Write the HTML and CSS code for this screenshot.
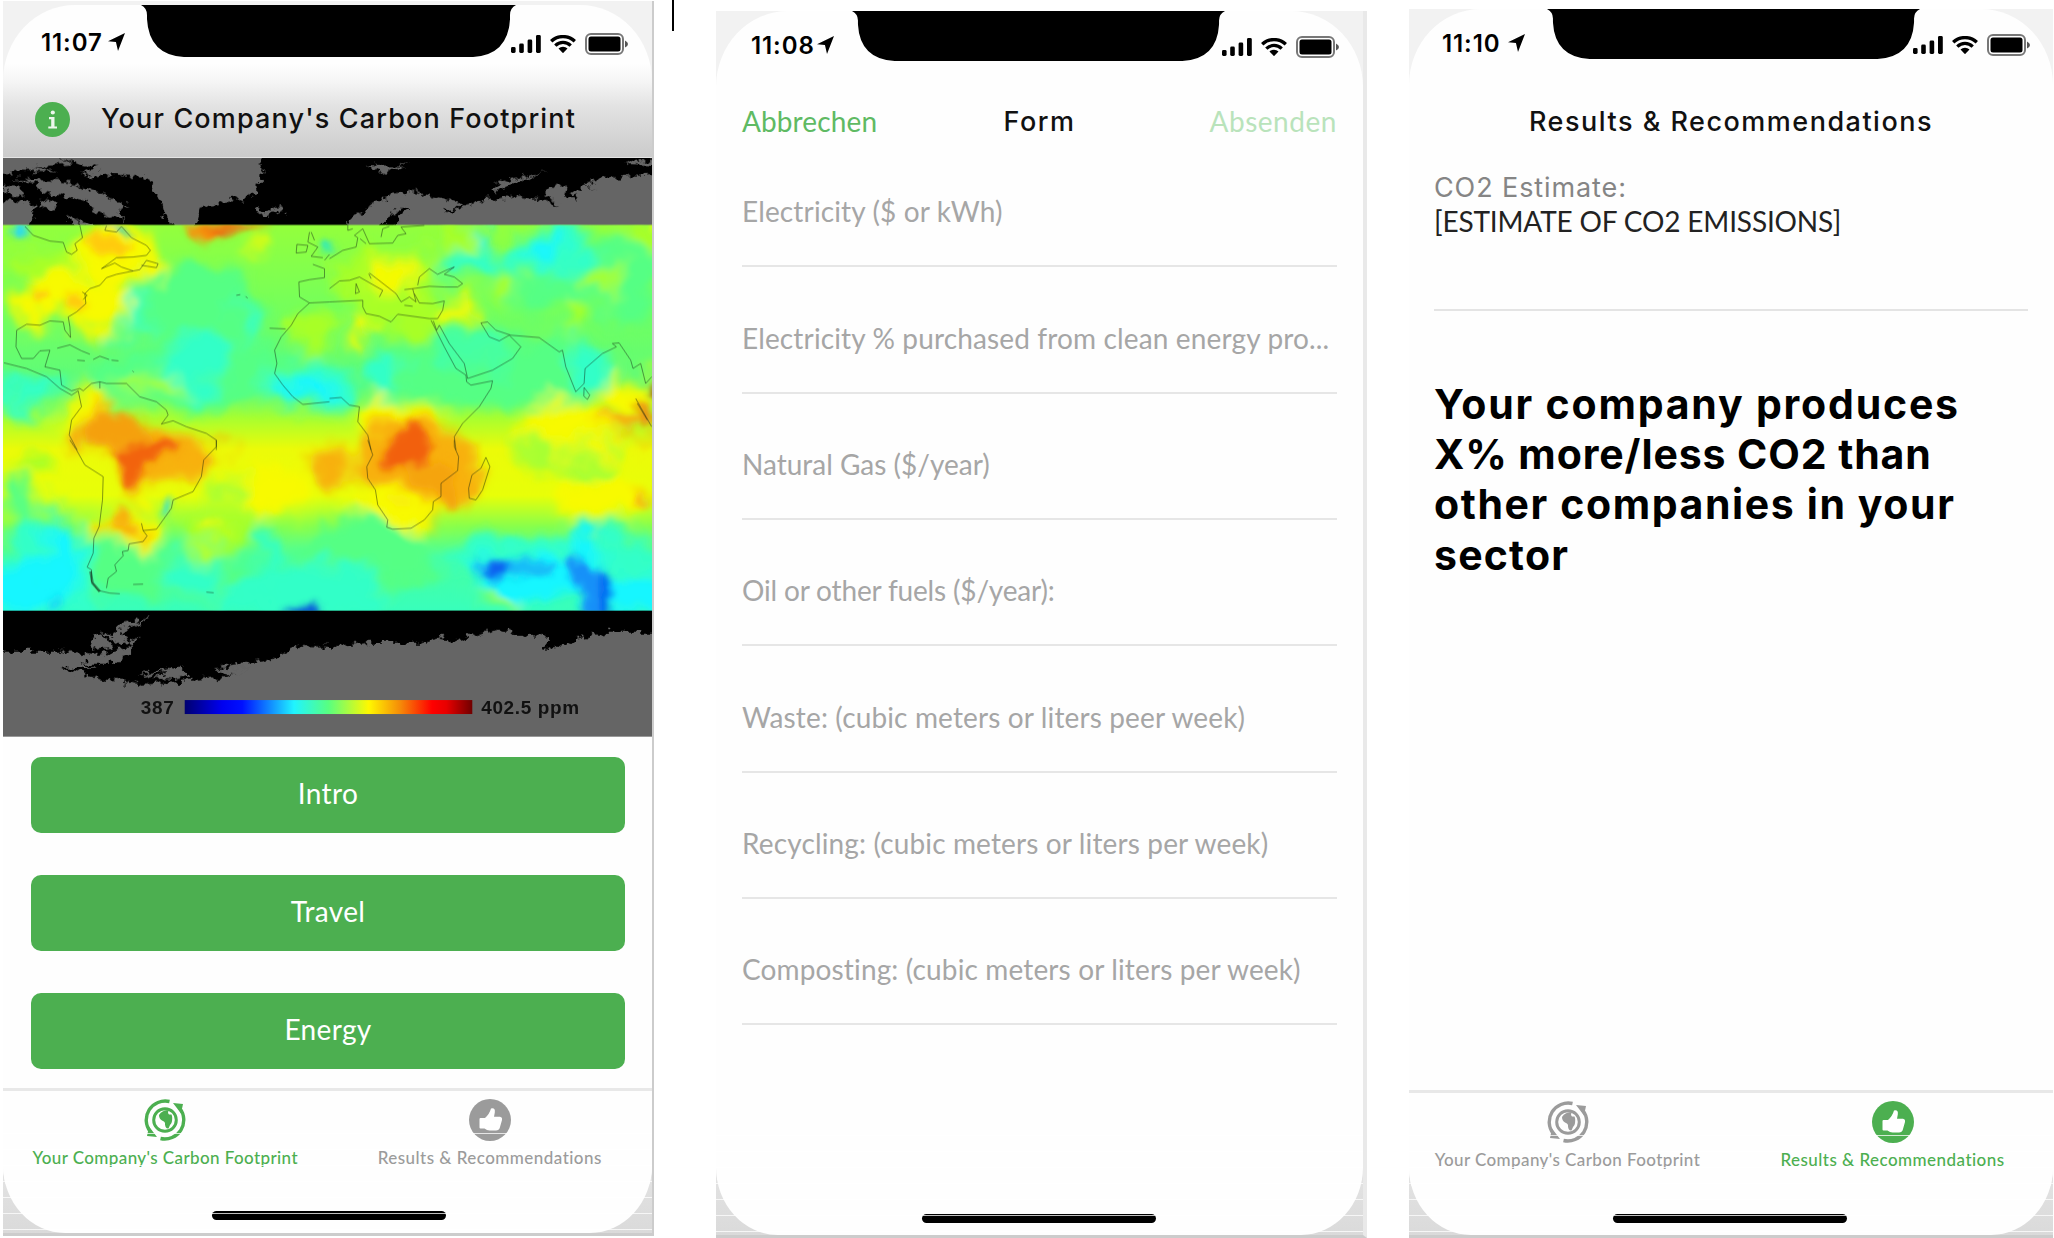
FILE: index.html
```
<!DOCTYPE html>
<html lang="en">
<head>
<meta charset="utf-8">
<title>Carbon Footprint App</title>
<link rel="stylesheet" href="styles.css">
</head>
<body>
<svg class="defs" width="0" height="0" aria-hidden="true">
  <symbol id="arrow" viewBox="0 0 18 19"><path d="M18 0 L0 8.6 L8.4 9.4 L10.6 19 Z"/></symbol>
  <symbol id="signal" viewBox="0 0 30 18"><rect x="0" y="12" width="4.6" height="6" rx="1.4"/><rect x="8.2" y="8.5" width="4.6" height="9.5" rx="1.4"/><rect x="16.6" y="4.5" width="4.6" height="13.500" rx="1.4"/><rect x="25" y="0" width="4.800" height="18" rx="1.4"/></symbol>
  <symbol id="wifi" viewBox="0 0 26 18"><g fill="none" stroke="currentColor" stroke-width="3.300"><path d="M1.200 6.300 A17 17 0 0 1 24.800 6.300"/><path d="M5.300 10.600 A11 11 0 0 1 20.700 10.600"/></g><path d="M8.500 13.600 A6.500 6.500 0 0 1 17.500 13.600 L13 18.200 Z"/></symbol>
  <symbol id="battery" viewBox="0 0 43 22"><rect x="1" y="1" width="37" height="20" rx="5" fill="none" stroke="#777" stroke-width="2"/><rect x="3.500" y="3.500" width="32" height="15" rx="2.500"/><path d="M40 7.500 Q43 9 43 11 Q43 13 40 14.500 Z" fill="#555"/></symbol>
  <symbol id="globe" viewBox="0 0 42 42"><g fill="none" stroke="currentColor" stroke-width="3.400"><path d="M25.500 2.500 A19 19 0 0 0 6.500 33"/><path d="M16.500 39.500 A19 19 0 0 0 35.500 9"/><circle cx="21" cy="21" r="11.300" stroke-width="3"/></g><path d="M29 4 L39 5 L37 14.500 Z M13 38 L3 37 L5 27.500 Z"/><path d="M15 16 Q19 10.500 25 11.500 Q23 13.500 25 15.500 L27.500 15.500 Q29 19 27.500 24 Q25.500 26 24.500 29.500 Q21.500 30 21 25.500 Q21.500 22.500 18 21.500 Q15 19.500 15 16Z"/></symbol>
  <symbol id="thumb" viewBox="0 0 42 42"><circle cx="21" cy="21" r="21"/><path d="M11.500 19 H16 Q20.500 15 22 9.500 Q26.500 8.500 25.800 13.500 L25 17.800 H31 Q33.500 18.400 33 21 L30.800 28.800 Q30 31.500 27 31.500 H20.500 Q18 31.500 15.500 29.500 H11.500 Q10.500 29.500 10.500 28.500 V20 Q10.500 19 11.500 19Z" fill="#fff"/></symbol>
  <symbol id="notch" viewBox="0 0 376 52" preserveAspectRatio="none"><path d="M0 0 H376 Q370 3 370 10 V14 Q368 50 333 52 H43 Q8 50 6 14 V10 Q6 3 0 0Z"/></symbol>
</svg>

<section class="phone phone-home">
  <div class="screen">
    <div class="status">
      <span class="time">11:07</span><svg class="arrow"><use href="#arrow"/></svg>
      <svg class="notch"><use href="#notch"/></svg>
      <span class="indicators"><svg class="signal"><use href="#signal"/></svg><svg class="wifi"><use href="#wifi"/></svg><svg class="battery"><use href="#battery"/></svg></span>
    </div>
    <header class="home-head">
      <svg class="info" viewBox="0 0 35 35"><circle cx="17.500" cy="17.500" r="17.500"/><g fill="#fff" opacity=".9"><circle cx="17.800" cy="10.500" r="2.100"/><path d="M14 15 H19.500 V24.500 H22 V26.600 H13.300 V24.500 H16.200 V17.200 H14Z"/></g></svg>
      <h1 class="title title-home">Your Company's Carbon Footprint</h1>
    </header>
    <svg class="map" viewBox="3 157.500 650 579" preserveAspectRatio="none">
      <defs>
        <linearGradient id="base" x1="0" y1="0" x2="0" y2="1"><stop offset="0" stop-color="#94ff3c"/><stop offset=".22" stop-color="#74ff5c"/><stop offset=".42" stop-color="#5cfc7c"/><stop offset=".5" stop-color="#a8ff30"/><stop offset=".58" stop-color="#ecfb08"/><stop offset=".7" stop-color="#e8ff08"/><stop offset=".78" stop-color="#88ff4c"/><stop offset=".86" stop-color="#48ffa0"/><stop offset="1" stop-color="#38ffbc"/></linearGradient>
        <linearGradient id="scale"><stop offset="0" stop-color="#000070"/><stop offset=".13" stop-color="#0000f0"/><stop offset=".2" stop-color="#0010ff"/><stop offset=".38" stop-color="#20f4ff"/><stop offset=".5" stop-color="#58ff80"/><stop offset=".64" stop-color="#fff800"/><stop offset=".75" stop-color="#f58a08"/><stop offset=".86" stop-color="#f00"/><stop offset=".91" stop-color="#e80000"/><stop offset="1" stop-color="#700000"/></linearGradient>
        <filter id="soft" filterUnits="userSpaceOnUse" x="-40" y="180" width="740" height="480"><feGaussianBlur stdDeviation="7" result="b"/><feTurbulence type="fractalNoise" baseFrequency=".022" numOctaves="3" seed="4" result="n"/><feDisplacementMap in="b" in2="n" scale="52" xChannelSelector="R" yChannelSelector="G"/><feGaussianBlur stdDeviation="1.500"/></filter>
        <filter id="fine" filterUnits="userSpaceOnUse" x="-40" y="180" width="740" height="480"><feGaussianBlur stdDeviation="3.500" result="b"/><feTurbulence type="fractalNoise" baseFrequency=".05" numOctaves="2" seed="9" result="n"/><feDisplacementMap in="b" in2="n" scale="14" xChannelSelector="R" yChannelSelector="G"/><feGaussianBlur stdDeviation=".8"/></filter>
        <filter id="rough" filterUnits="userSpaceOnUse" x="-20" y="130" width="700" height="630"><feTurbulence type="fractalNoise" baseFrequency=".13" numOctaves="3" seed="2" result="n"/><feDisplacementMap in="SourceGraphic" in2="n" scale="13" xChannelSelector="R" yChannelSelector="G"/></filter>
        <clipPath id="band"><rect x="3" y="224.500" width="650" height="386.500"/></clipPath>
      </defs>
      <rect x="3" y="157" width="650" height="580" fill="#000"/>
      <g fill="#656565" filter="url(#rough)">
        <g transform="translate(0 150) scale(.33333)">
          <path d="M120 0 H810 L775 45 800 60 775 72 785 95 770 98 775 125 740 140 670 155 600 175 580 245 H530 L490 190 480 150 455 120 460 95 420 78 340 72 270 80 240 68 300 50 230 40 Z"/>
          <path d="M765 175 L800 182 840 168 855 180 800 195 775 188Z"/>
          <path d="M-12 0 H130 L220 42 100 48 170 62 60 60 -12 75Z M30 84 L120 88 230 100 300 130 390 165 350 180 375 212 310 192 250 150 190 135 130 130 110 100 Z M-12 150 L60 155 110 170 100 200 75 240 H-12Z M-12 105 L50 108 75 130 45 140Z M120 145 L180 160 160 180 125 165Z M190 195 L320 240 H240Z"/>
        </g>
        <g transform="translate(330 150) scale(.33333)">
          <path d="M50 245 V212 L95 190 140 155 190 132 250 124 310 135 395 158 385 175 335 180 355 188 390 180 400 165 460 150 560 138 640 148 690 165 645 130 670 105 710 108 705 140 750 150 730 125 770 105 800 125 770 100 860 78 998 72 V245 H200 L210 195 240 178 210 176 165 205 160 245Z"/>
          <path d="M105 42 L170 45 255 38 200 48 230 60 180 55 155 68 130 50Z M490 112 L540 85 658 66 600 82 550 95 520 115 530 122Z M885 38 L920 28 H998 V48 L930 42Z"/>
        </g>
        <path d="M-10 652 L60 652 96 655 130 648 138 637 120 645 102 632 118 635 120 625 150 618 122 632 132 645 132 655 115 663 80 663 95 668 60 668 95 677 130 676 155 672 168 668 188 670 190 676 155 679 190 680 238 674 236 676 213 669 240 665 272 660 297 646 330 647 370 643 420 643 440 638 455 641 480 634 500 630 520 634 550 637 545 650 558 649 578 638 610 632 670 632 V757 H-10Z"/>
        <path d="M92 640 L102 632 112 648 90 651Z"/>
        <path d="M75 669 L115 668 145 676 165 672 175 676 237 676 180 682 143 685 90 677Z" fill="#000"/>
        <path d="M155 678 L170 670 186 669 189 676 175 679Z M213 669 L250 668 239 675Z"/>
      </g>

      <g clip-path="url(#band)">
        <rect x="3" y="224" width="650" height="388" fill="url(#base)"/>
        <g filter="url(#soft)">
          <g fill="#54ff84"><ellipse cx="200" cy="310" rx="65" ry="50"/><ellipse cx="200" cy="375" rx="110" ry="34"/><ellipse cx="500" cy="370" rx="120" ry="36"/><ellipse cx="570" cy="270" rx="90" ry="40"/><ellipse cx="160" cy="572" rx="90" ry="26"/><ellipse cx="370" cy="555" rx="70" ry="40"/><ellipse cx="20" cy="500" rx="14" ry="20"/><ellipse cx="638" cy="300" rx="20" ry="28"/></g>
          <g fill="#30ffc8"><ellipse cx="190" cy="368" rx="42" ry="28"/><ellipse cx="135" cy="316" rx="7" ry="22"/><ellipse cx="247" cy="325" rx="7" ry="22"/><ellipse cx="22" cy="395" rx="32" ry="14"/><ellipse cx="310" cy="385" rx="38" ry="24"/><ellipse cx="385" cy="380" rx="22" ry="24"/><ellipse cx="470" cy="262" rx="30" ry="14"/><ellipse cx="550" cy="252" rx="46" ry="24"/><ellipse cx="586" cy="365" rx="22" ry="22"/><ellipse cx="50" cy="560" rx="44" ry="52"/><ellipse cx="30" cy="600" rx="64" ry="36"/><ellipse cx="190" cy="570" rx="30" ry="20"/><ellipse cx="320" cy="590" rx="60" ry="28"/><ellipse cx="272" cy="548" rx="9" ry="26"/><ellipse cx="560" cy="565" rx="110" ry="34"/><ellipse cx="630" cy="560" rx="40" ry="20"/><ellipse cx="250" cy="600" rx="50" ry="14"/></g>
          <ellipse cx="475" cy="352" rx="42" ry="18" fill="#44ffa4"/>
          <g fill="#18f6ff"><ellipse cx="307" cy="390" rx="24" ry="13"/><ellipse cx="548" cy="252" rx="20" ry="12"/><ellipse cx="482" cy="236" rx="8" ry="10"/><ellipse cx="62" cy="545" rx="16" ry="34"/><ellipse cx="30" cy="590" rx="42" ry="26"/><ellipse cx="550" cy="580" rx="80" ry="24"/><ellipse cx="580" cy="545" rx="22" ry="12"/><ellipse cx="630" cy="595" rx="40" ry="28"/></g>
          <g fill="#a8ff28"><ellipse cx="45" cy="265" rx="42" ry="22"/><ellipse cx="317" cy="330" rx="22" ry="24"/><ellipse cx="452" cy="236" rx="22" ry="12"/><ellipse cx="507" cy="290" rx="14" ry="12"/><ellipse cx="605" cy="282" rx="18" ry="12"/><ellipse cx="572" cy="320" rx="12" ry="14"/><ellipse cx="640" cy="238" rx="18" ry="14"/><ellipse cx="410" cy="310" rx="60" ry="24"/><ellipse cx="385" cy="275" rx="50" ry="24"/><ellipse cx="220" cy="530" rx="36" ry="20"/><ellipse cx="40" cy="465" rx="22" ry="12"/><ellipse cx="150" cy="385" rx="30" ry="8"/></g>
          <g fill="#f8fa04"><ellipse cx="65" cy="298" rx="54" ry="24"/><ellipse cx="95" cy="306" rx="34" ry="24"/><ellipse cx="118" cy="255" rx="42" ry="30"/><ellipse cx="252" cy="240" rx="9" ry="9"/><ellipse cx="395" cy="275" rx="24" ry="14"/><ellipse cx="363" cy="329" rx="10" ry="13"/><ellipse cx="458" cy="308" rx="16" ry="9"/><ellipse cx="90" cy="410" rx="24" ry="16"/><ellipse cx="400" cy="422" rx="48" ry="16"/><ellipse cx="570" cy="430" rx="46" ry="28"/><ellipse cx="630" cy="395" rx="30" ry="20"/><ellipse cx="125" cy="525" rx="30" ry="24"/><ellipse cx="215" cy="528" rx="10" ry="7"/><ellipse cx="610" cy="500" rx="50" ry="24"/><ellipse cx="270" cy="490" rx="40" ry="24"/><ellipse cx="400" cy="505" rx="44" ry="24"/></g>
          <g fill="#a8ff30"><ellipse cx="540" cy="455" rx="26" ry="18"/><ellipse cx="590" cy="463" rx="24" ry="14"/><ellipse cx="222" cy="490" rx="18" ry="12"/><ellipse cx="500" cy="607" rx="24" ry="6"/></g>
          <g fill="#f8b010"><ellipse cx="108" cy="430" rx="28" ry="20"/><ellipse cx="165" cy="455" rx="54" ry="22"/><ellipse cx="150" cy="480" rx="28" ry="16"/><ellipse cx="415" cy="455" rx="56" ry="34"/><ellipse cx="450" cy="480" rx="26" ry="30"/><ellipse cx="333" cy="465" rx="22" ry="20"/><ellipse cx="622" cy="428" rx="26" ry="12"/><ellipse cx="648" cy="498" rx="14" ry="10"/><ellipse cx="120" cy="527" rx="16" ry="14"/></g>
        </g>
        <g filter="url(#fine)">
          <path d="M182 222 H275 L225 233 202 243Z" fill="#f59410"/>
          <path d="M200 228 L260 224 220 233Z" fill="#f04808"/>
          <g fill="#ffcb08"><ellipse cx="112" cy="247" rx="20" ry="9"/><ellipse cx="75" cy="303" rx="11" ry="8"/><ellipse cx="40" cy="294" rx="8" ry="6"/><ellipse cx="96" cy="240" rx="10" ry="8"/></g>
          <path d="M88 425 L100 412 116 416 130 411 138 425 155 436 150 442 120 446 85 442Z" fill="#f5a00c"/>
          <path d="M115 452 L132 446 155 440 182 444 178 452 155 456 142 468 135 488 122 478Z" fill="#f2640c"/>
          <path d="M384 452 L400 430 412 418 426 430 434 448 424 464 400 468 382 466Z" fill="#f2600a"/>
          <path d="M405 470 L440 462 455 470 455 505 448 514 440 492 412 486Z" fill="#f5a40c"/>
          <ellipse cx="122" cy="517" rx="8" ry="10" fill="#f8b010"/><ellipse cx="400" cy="500" rx="12" ry="7" fill="#f8f008"/>
          <ellipse cx="20" cy="230" rx="7" ry="7" fill="#20d8ff"/><path d="M102 224 H125 L135 236 120 230Z" fill="#20c8e8"/><ellipse cx="112" cy="229" rx="5" ry="3" fill="#f8e808"/>
          <ellipse cx="655" cy="393" rx="5" ry="5" fill="#a80000"/><path d="M636 402 L644 402 656 420 648 424Z" fill="#f08010"/>
          <ellipse cx="655" cy="228" rx="6" ry="5" fill="#ff0"/><ellipse cx="328" cy="246" rx="6" ry="6" fill="#28e8c8"/>
          <path d="M164 505 L174 500 172 510 165 518Z" fill="#28e0e0"/>
          <path d="M473 562 H490 L515 560 555 562 555 574 515 576 498 582 484 580Z" fill="#18bcf8"/>
          <path d="M490 558 L510 566 506 578 484 578Z" fill="#0c60f0"/>
          <path d="M565 562 L582 558 590 572 608 573 610 618 585 618 584 594 572 580Z" fill="#1890f8"/><path d="M601 575 L609 577 611 618 603 618Z" fill="#0458f0"/>
          <path d="M280 614 L310 607 318 603 320 618Z" fill="#0040e0"/><ellipse cx="56" cy="603" rx="6" ry="6" fill="#18d8f8"/>
        </g>
      </g>

      <g fill="none" stroke="#102010" stroke-opacity=".5" stroke-width="2.800" stroke-linejoin="round">
        <g transform="translate(0 150) scale(.33333)">
          <path d="M75 228 L100 255 150 272 190 276 200 305 215 312 232 300 225 280 248 262 240 225"/>
          <path d="M320 226 L315 240 350 245 365 228 395 262 440 285 452 300 440 315 400 320 350 322 305 355 345 338 365 350 400 362 420 358 440 330 475 340 470 352 425 345 M400 362 L350 372 320 382 300 405 270 415 255 430 258 460 230 485 205 500 210 530 212 562 195 540 190 515 150 512 120 525 80 522 50 540 48 590 65 625 100 625 120 602 150 600 135 650 180 660 185 705 215 722 240 715 250 722 275 700 300 695 320 700 380 700 420 740 470 755 500 780 505 795 485 822 520 812 560 830 620 850 650 870 650 900"/>
          <path d="M12 638 L80 655 140 680 180 715 215 735 235 722 245 770 215 810 208 855 232 900"/>
          <path d="M172 594 L210 584 245 602 270 612 M280 628 L300 618 328 628 M232 630 L255 632 M335 630 L356 632 M398 662 L402 666 M300 695 V715 M710 435 L722 433 M738 438 L744 444 M810 534 L858 536 M247 425 L262 435 250 448"/>
          <path d="M990 455 L930 458 895 490 875 525 845 560 825 600 832 640 825 670 850 705 880 740 910 763 990 755 M930 458 L900 440 898 395 930 388 975 382 975 355 940 342 M892 282 L890 308 920 305 925 285Z M930 245 L925 275 955 290 935 318 970 322 M935 245 L945 270 M990 312 L975 330"/>
        </g>
        <g transform="translate(330 150) scale(.33333)">
          <path d="M0 325 L40 300 80 290 85 262 75 255 100 235 120 280 190 278 205 255 230 250 215 230 285 225 M55 215 L55 240 70 235 M155 260 L160 235 180 228 M92 265 L110 280"/>
          <path d="M0 415 L30 392 60 390 90 380 160 420 150 440 M120 368 L155 395 200 430 215 455 240 440 260 455 250 415 225 418 M118 370 L125 385 M80 400 L90 425 78 430Z M225 465 L250 468 M250 415 L300 408 345 410 385 410 400 400 375 380 345 372 375 350 350 360 325 372 300 355 270 380 265 405 M255 430 L270 458 310 460 345 452 340 480 325 505 300 505 205 492 185 515 150 498 110 490 100 470 100 450 0 455"/>
          <path d="M305 510 L345 590 380 655 410 675 412 695 425 705 490 692 485 715 450 770 400 820 375 860 380 900 M312 512 L322 540 330 525 360 580 405 640 415 685 490 660 550 625 575 590 540 555 510 572 480 560 455 518 475 515 500 540 545 555 630 562 690 605 700 600 710 650 740 725 765 700 768 655 820 610 862 590 850 580 870 578 905 630 912 655 935 640 950 700 968 680 M765 712 L782 735 775 748 764 738Z M920 745 L968 830 M925 760 L955 810"/>
          <path d="M0 745 L35 742 60 765 90 770 85 815 115 855 125 900"/>
        </g>
        <g transform="translate(0 440) scale(.33333)">
          <path d="M210 0 L230 30 255 75 310 110 308 180 298 260 282 295 280 340 262 382 275 390 275 425 295 452 330 460 360 462 M650 0 L650 20 612 60 605 110 580 155 520 180 515 205 490 240 470 268 430 272 425 250 M430 272 L442 288 430 305 388 312 385 332 368 335 370 348 345 375 350 395 325 415 320 445 M400 434 L430 433 M620 457 L642 459"/>
          <path d="M272 395 L278 430 300 455" stroke-width="8"/>
        </g>
        <g transform="translate(330 440) scale(.33333)">
          <path d="M115 0 L130 45 112 80 115 115 138 150 145 195 175 240 172 262 190 268 245 265 285 240 310 210 312 185 335 170 335 130 385 92 388 50 375 20 375 0 M470 52 L482 80 460 150 440 180 420 175 418 145 428 105 455 85Z"/>
        </g>
      </g>
      <rect x="185" y="700.500" width="288" height="14" fill="url(#scale)"/>
      <g class="ppm"><text x="141" y="714.500" textLength="33">387</text><text x="482" y="714.500" textLength="98">402.5 ppm</text></g>
    </svg>
    <div class="actions">
      <button>Intro</button><button>Travel</button><button>Energy</button>
    </div>
    <nav class="tabs">
      <div class="tab on"><svg><use href="#globe"/></svg><span class="lbl-a">Your Company's Carbon Footprint</span></div>
      <div class="tab"><svg><use href="#thumb"/></svg><span class="lbl-b">Results &amp; Recommendations</span></div>
    </nav>
    <div class="home-bar"></div>
  </div>
</section>

<div class="caret"></div>

<section class="phone phone-form">
  <div class="screen">
    <div class="status">
      <span class="time">11:08</span><svg class="arrow"><use href="#arrow"/></svg>
      <svg class="notch"><use href="#notch"/></svg>
      <span class="indicators"><svg class="signal"><use href="#signal"/></svg><svg class="wifi"><use href="#wifi"/></svg><svg class="battery"><use href="#battery"/></svg></span>
    </div>
    <header class="form-head"><span class="cancel">Abbrechen</span><h1 class="title">Form</h1><span class="send">Absenden</span></header>
    <div class="fields">
      <div class="field">Electricity ($ or kWh)</div>
      <div class="field">Electricity % purchased from clean energy pro...</div>
      <div class="field gas">Natural Gas ($/year)</div>
      <div class="field oil">Oil or other fuels ($/year):</div>
      <div class="field">Waste: (cubic meters or liters peer week)</div>
      <div class="field">Recycling: (cubic meters or liters per week)</div>
      <div class="field">Composting: (cubic meters or liters per week)</div>
    </div>
    <div class="home-bar"></div>
  </div>
</section>

<section class="phone phone-results">
  <div class="screen">
    <div class="status">
      <span class="time">11:10</span><svg class="arrow"><use href="#arrow"/></svg>
      <svg class="notch"><use href="#notch"/></svg>
      <span class="indicators"><svg class="signal"><use href="#signal"/></svg><svg class="wifi"><use href="#wifi"/></svg><svg class="battery"><use href="#battery"/></svg></span>
    </div>
    <header class="results-head"><h1 class="title">Results &amp; Recommendations</h1></header>
    <div class="results">
      <div class="estimate"><div class="est-label">CO2 Estimate:</div><div class="est-value">[ESTIMATE OF CO2 EMISSIONS]</div></div>
      <h2><span class="l1">Your company produces</span><span class="l2">X% more/less CO2 than</span><span class="l3">other companies in your</span><span class="l4">sector</span></h2>
    </div>
    <nav class="tabs">
      <div class="tab"><svg><use href="#globe"/></svg><span class="lbl-a">Your Company's Carbon Footprint</span></div>
      <div class="tab on"><svg><use href="#thumb"/></svg><span class="lbl-b">Results &amp; Recommendations</span></div>
    </nav>
    <div class="home-bar"></div>
  </div>
</section>
</body>
</html>
```
FILE: styles.css
```
* { box-sizing: border-box; }
body { margin: 0; width: 2054px; height: 1238px; overflow: hidden; display: flex; align-items: flex-start; background: #fff; font-family: Lato, sans-serif; color: #111; }
h1, h2 { margin: 0; }
svg { display: block; flex: none; fill: currentColor; }
.defs { position: absolute; }

.phone { position: relative; flex: none; background: linear-gradient(#f2f2f2 0 60%, #e8e8e8 92%, #dadada); border-bottom: 3px solid #ccc; }
.phone::after { content: ""; position: absolute; left: 0; right: 0; bottom: 0; height: 100px; background: repeating-linear-gradient(rgba(255,255,255,.75) 0 1px, transparent 1px 16px); }
.screen { height: 100%; display: flex; flex-direction: column; background: #fefefe; border-radius: 72px 72px 62px 62px / 76px 76px 68px 68px; overflow: hidden; position: relative; }
.phone-home { width: 651px; height: 1235px; margin: 1px 0 0 3px; padding-top: 4px; border-right: 2px solid #ccc; }
.phone-form { width: 651px; height: 1227px; margin: 11px 0 0 42px; border-right: 4px solid #e9e9e9; }
.phone-results { width: 644px; height: 1229px; margin: 9px 0 0 42px; }
.caret { flex: none; width: 2px; height: 31px; margin-left: 18px; background: #000; }

.status { flex: none; height: 70px; position: relative; display: flex; align-items: flex-start; padding: 28px 24px 0 38px; color: #000; }
.time { font: 600 24px/20px Inter, sans-serif; letter-spacing: .9px; width: 67px; }
.arrow { width: 17px; height: 18px; }
.notch { position: absolute; left: 138px; top: 0; width: 375px; height: 52px; color: #000; }
.indicators { margin-left: auto; display: flex; align-items: center; }
.signal { width: 30px; height: 18px; }
.wifi { width: 26px; height: 18px; margin-left: 9px; }
.battery { width: 43px; height: 22px; margin-left: 9px; }

.title { font: 500 27px/34px Inter, sans-serif; letter-spacing: 1.5px; white-space: nowrap; }
.home-head { flex: none; height: 82.5px; display: flex; align-items: center; padding: 6px 0 0 32px; }
.phone-home .screen { background: linear-gradient(#fefefe 0 58px, #f4f4f4 78px, #e2e2e2 102px, #cbcbcb 152px, #fefefe 153px); }
.info { width: 35px; height: 35px; color: #4caf50; }
.title-home { margin-left: 31px; letter-spacing: 1.15px; }
.map { width: 649px; height: 579px; border-bottom: 1px solid #999; }
.ppm { font: 700 19px "Liberation Sans", sans-serif; fill: #111; }
.actions { height: 351px; padding: 20px 27px 0 28px; display: flex; flex-direction: column; gap: 42px; background: #fefefe; }
.actions button { height: 76px; flex: none; border: 0; border-radius: 10px; background: #4caf50; color: #fff; font: 400 28px/34px Lato, sans-serif; letter-spacing: .35px; padding: 0 0 3px; }

.tabs { flex: none; height: 96px; border-top: 3px solid #e8e8e8; display: flex; background: #fefefe; }
.tab { flex: 1; display: flex; flex-direction: column; align-items: center; color: #9b9b9b; padding-top: 8px; font: 500 17px/22px Lato, sans-serif; white-space: nowrap; }
.tab svg { width: 42px; height: 42px; margin-bottom: 6px; }
.tab.on { color: #4caf50; }
.lbl-a { letter-spacing: .4px; }
.lbl-b { letter-spacing: .46px; }
.home-bar { position: absolute; left: 209px; bottom: 13px; width: 234px; height: 9.500px; border-radius: 5px; background: #000; }

.phone-form .status, .phone-results .status { padding-top: 25px; padding-left: 35px; }
.phone-form .time, .phone-results .time { width: 66px; }
.phone-form .notch, .phone-results .notch { left: 136px; width: 373px; height: 50px; }
.phone-form .status { padding-right: 24px; }
.form-head { flex: none; height: 60px; display: grid; grid-template-columns: 1fr auto 1fr; padding: 22px 26px 0 26px; font-size: 28px; line-height: 36px; }
.form-head .title { line-height: 37px; }
.cancel { color: #5fba63; letter-spacing: .12px; }
.send { color: #b9e3bb; letter-spacing: .54px; text-align: right; }
.fields { padding: 0 26px; }
.field { height: 126.330px; border-bottom: 2.500px solid #e6e6e6; display: flex; align-items: flex-end; padding-bottom: 36px; font-size: 28px; line-height: 36px; letter-spacing: .14px; color: #a6a6a6; white-space: nowrap; }
.gas { letter-spacing: 0; }
.oil { letter-spacing: -.17px; }
.phone-form .home-bar { left: 206px; bottom: 12px; }

.phone-results .status { padding-left: 33px; padding-right: 23px; }
.phone-results .notch { left: 138px; }
.results-head { flex: none; height: 84px; padding-top: 26px; text-align: center; }
.results { flex: none; height: 926.500px; padding: 8px 25px 0 25px; }
.estimate { height: 140px; border-bottom: 2.500px solid #e4e4e4; white-space: nowrap; }
.est-label { font: 400 27px/34px Inter, sans-serif; letter-spacing: .9px; color: #858585; }
.est-value { font-size: 28px; line-height: 32px; letter-spacing: -.16px; color: #222; }
h2 { margin-top: 68px; font: 700 41px/50.200px Inter, sans-serif; color: #000; white-space: nowrap; }
h2 span { display: block; }
.l1 { letter-spacing: 1.8px; }
.l2 { letter-spacing: .9px; }
.l3 { letter-spacing: 1.6px; }
.l4 { letter-spacing: 1.2px; }
.phone-results .tabs { width: 650px; margin-left: -4px; }
.phone-results .home-bar { left: 204px; bottom: 12px; }
```
